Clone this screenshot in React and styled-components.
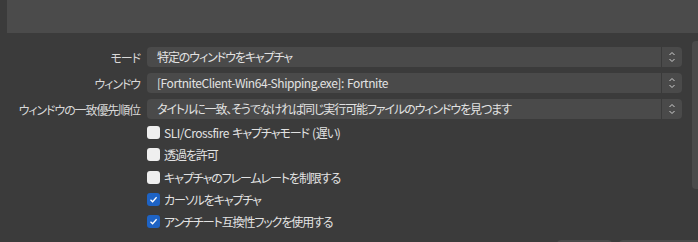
import React from 'react'
import styled, { createGlobalStyle } from 'styled-components'

const GlobalStyle = createGlobalStyle`
  html, body {
    margin: 0;
    padding: 0;
    background: #3b3b3b;
  }
  body {
    font-family: "Noto Sans CJK JP", "Noto Sans", sans-serif;
    font-size: 12px;
    font-feature-settings: "palt";
    letter-spacing: -1.1px;
    color: #dedede;
    overflow: hidden;
  }
`

const Page = styled.div`
  width: 698px;
  height: 242px;
  display: flex;
  flex-direction: column;
  overflow: hidden;
`

const Preview = styled.div`
  height: 33px;
  margin-left: 7px;
  background: #4b4b4b;
  flex-shrink: 0;
`

const Main = styled.div`
  display: flex;
  align-items: flex-start;
  margin-top: 8px;
`

const Form = styled.div`
  width: 682px;
  padding-top: 6px;
  display: flex;
  flex-direction: column;
`

const SelectRow = styled.div`
  display: grid;
  grid-template-columns: 140px 535px;
  column-gap: 7px;
  align-items: center;
  height: 20px;
  margin-bottom: 6px;
`

const Label = styled.div`
  text-align: right;
  white-space: nowrap;
  color: #d8d8d8;
`

const Select = styled.div`
  height: 20px;
  display: flex;
  background: #4a4a4a;
  border-radius: 4px;
  overflow: hidden;
`

const SelectText = styled.div`
  flex: 1;
  padding-left: 10px;
  line-height: 20px;
  white-space: nowrap;
  overflow: hidden;
  color: #e2e2e2;
`

const Latin = styled.span`
  letter-spacing: -0.45px;
  word-spacing: 1px;
`

const Spinner = styled.div`
  width: 20px;
  border-left: 1px solid #3a3a3a;
  display: flex;
  align-items: center;
  justify-content: center;
`

const Checks = styled.div`
  display: flex;
  flex-direction: column;
  gap: 9.25px;
  margin-top: 1px;
  padding-left: 147px;
`

const CheckRow = styled.label`
  display: flex;
  align-items: center;
  height: 13px;
  gap: 4px;
  white-space: pre;
  color: #e2e2e2;
`

const Box = styled.span`
  width: 13px;
  height: 13px;
  box-sizing: border-box;
  border-radius: 3px;
  background: ${p => (p.$checked ? '#1e63c4' : '#efefef')};
  display: flex;
  align-items: center;
  justify-content: center;
  flex-shrink: 0;
`

const Side = styled.div`
  width: 10px;
  height: 148px;
  margin-left: 10px;
  background: #4a4a4a;
  border-radius: 4px;
  flex-shrink: 0;
`

const Footer = styled.div`
  display: flex;
  gap: 7px;
  margin-top: 12px;
  padding-left: 557px;
`

const FooterButton = styled.div`
  width: ${p => p.$w}px;
  height: 24px;
  background: #4a4a4a;
  border-radius: 4px;
  flex-shrink: 0;
`

const SpinIcon = () => (
  <svg width="8" height="12" viewBox="0 0 8 12">
    <path d="M1.5 4 L4 1.5 L6.5 4" fill="none" stroke="#cfcfcf" strokeWidth="1" />
    <path d="M1.5 8 L4 10.5 L6.5 8" fill="none" stroke="#cfcfcf" strokeWidth="1" />
  </svg>
)

const Tick = () => (
  <svg width="9" height="9" viewBox="0 0 9 9">
    <path d="M1.5 4.8 L3.6 6.8 L7.6 2.2" fill="none" stroke="#ffffff" strokeWidth="1.3" />
  </svg>
)

// latin runs get their own spacing, the japanese font is tightened more
const Mixed = ({ text }) =>
  text.split(/([\x20-\x7e]+)/).map((part, i) =>
    /[\x20-\x7e]/.test(part) ? <Latin key={i}>{part}</Latin> : part
  )

const selects = [
  ['モード', '特定のウィンドウをキャプチャ'],
  ['ウィンドウ', '[FortniteClient-Win64-Shipping.exe]: Fortnite'],
  ['ウィンドウの一致優先順位', 'タイトルに一致、そうでなければ同じ実行可能ファイルのウィンドウを見つます'],
]

const checks = [
  ['SLI/Crossfire キャプチャモード (遅い)', false],
  ['透過を許可', false],
  ['キャプチャのフレームレートを制限する', false],
  ['カーソルをキャプチャ', true],
  ['アンチチート互換性フックを使用する', true],
]

export default function App() {
  return (
    <>
      <GlobalStyle />
      <Page>
        <Preview />
        <Main>
          <Form>
            {selects.map(([label, value]) => (
              <SelectRow key={label}>
                <Label>{label}</Label>
                <Select>
                  <SelectText><Mixed text={value} /></SelectText>
                  <Spinner><SpinIcon /></Spinner>
                </Select>
              </SelectRow>
            ))}
            <Checks>
              {checks.map(([text, checked]) => (
                <CheckRow key={text}>
                  <Box $checked={checked}>{checked && <Tick />}</Box>
                  <span><Mixed text={text} /></span>
                </CheckRow>
              ))}
            </Checks>
          </Form>
          <Side />
        </Main>
        <Footer>
          <FooterButton $w={55} />
          <FooterButton $w={90} />
        </Footer>
      </Page>
    </>
  )
}
